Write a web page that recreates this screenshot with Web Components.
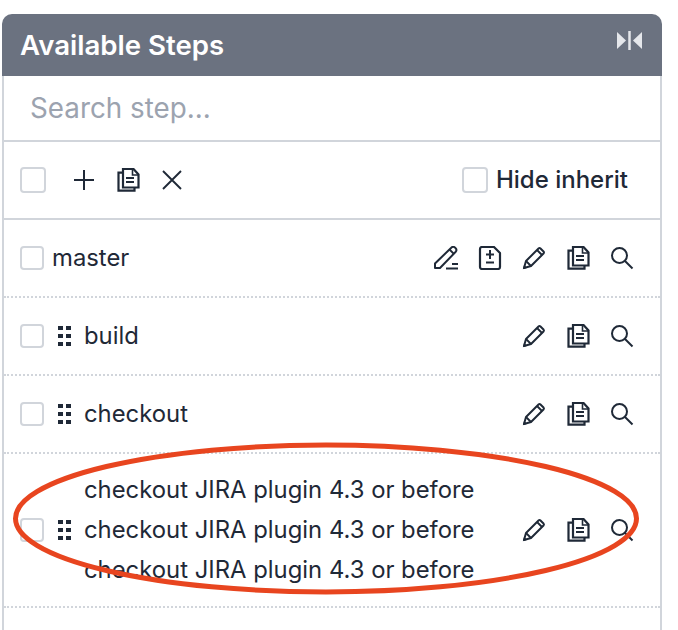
<!doctype html>
<html>
	<head>
		<meta charset="utf-8">
		<title>Available Steps</title>
		<style>
			html, body { margin: 0; height: 100%; background: #fff; }
			body { font-family: Inter, "Liberation Sans", sans-serif; color: #1f2937; overflow: hidden; }
		</style>
	</head>
	<body>
		<steps-panel>
			<steps-toolbar></steps-toolbar>
			<step-row master>master</step-row>
			<step-row>build</step-row>
			<step-row>checkout</step-row>
			<step-row>checkout JIRA plugin 4.3 or before<br>checkout JIRA plugin 4.3 or before<br>checkout JIRA plugin 4.3 or before</step-row>
		</steps-panel>
		<marker-ring></marker-ring>

		<script>
			const icons = {
				plus: '<path d="M12 2v20M2 12h20" stroke-width="2"/>',
				close: '<path d="M3 3l18 18M21 3L3 21" stroke-width="1.900"/>',
				copy: '<path d="M6 4.700H2.500v18H18.500V19" stroke-width="2.200"/><path d="M7 1h10.500l5 5.500v13H7z" stroke-width="2.200"/><path d="M16.500 1v6h6" stroke-width="1.600"/><path d="M10 10h8M10 14h8" stroke-width="2"/>',
				pencil: '<path d="M2 22l2-7L16.500 2.500a1.500 1.500 0 0 1 2 0l3 3a1.500 1.500 0 0 1 0 2L9 20z" stroke-width="2" stroke-linejoin="round"/><path d="M15 4l5 5M4 15l5 5" stroke-width="1.800"/><path d="M.8 23.200l4-1.200-2.800-2.800z" fill="currentColor" stroke="none"/>',
				edit: '<path d="M1 22v-4.500L17 2a2.600 2.600 0 0 1 4.500 4L6 22z" stroke-width="2" stroke-linejoin="round"/><path d="M15.500 3.500l4.500 4.500" stroke-width="1.800"/><path d="M12 22.500h12M18 18h6" stroke-width="2"/>',
				doc: '<path d="M4 1h12l6 6v14a2 2 0 0 1-2 2H4a2 2 0 0 1-2-2V3a2 2 0 0 1 2-2z" stroke-width="2.200" stroke-linejoin="round"/><path d="M12 4v9M8 8.500h8M8 16.500h8" stroke-width="2"/>',
				search: '<circle cx="9.500" cy="9.500" r="7.500" stroke-width="2"/><path d="M15 15l7.500 7.500" stroke-width="2"/>',
				collapse: '<path d="M1 1l9 8.500L1 18z" fill="currentColor" stroke="none"/><path d="M13.500 0v19" stroke-width="2.500"/><path d="M26 1l-9 8.500 9 8.500z" fill="currentColor" stroke="none"/>'
			};

			// plain svg icon, picked by its name attribute
			customElements.define('step-icon', class extends HTMLElement {
				constructor() {
					super();
					let name = this.getAttribute('name');
					let w = name === 'collapse' ? 27 : 24;
					let h = name === 'collapse' ? 19 : 24;
					this.attachShadow({mode: 'open'}).innerHTML = `
					<style>
						:host { display: block; width: ${w}px; height: ${h}px; flex: none; }
						svg { display: block; fill: none; stroke: currentColor; }
					</style>
					<svg width="${w}" height="${h}" viewBox="0 0 ${w} ${h}">${icons[name]}</svg>`;
				}
			});

			customElements.define('step-check', class extends HTMLElement {
				constructor() {
					super();
					this.attachShadow({mode: 'open'}).innerHTML = `
					<style>
						:host {
							display: block; flex: none; box-sizing: border-box;
							width: var(--check-size, 24px); height: var(--check-size, 24px);
							border: 2px solid #d1d5db; border-radius: 4px; background: #fff;
						}
					</style>`;
				}
			});

			customElements.define('drag-handle', class extends HTMLElement {
				constructor() {
					super();
					this.attachShadow({mode: 'open'}).innerHTML = `
					<style>
						:host { display: grid; grid-template-columns: 5px 5px; gap: 4px 3px; flex: none; }
						i { display: block; width: 5px; height: 4px; background: #1f2937; }
					</style>
					<i></i><i></i><i></i><i></i><i></i><i></i>`;
				}
			});

			customElements.define('step-row', class extends HTMLElement {
				constructor() {
					super();
					let master = this.hasAttribute('master');
					let actions = (master ? ['edit', 'doc'] : []).concat(['pencil', 'copy', 'search']);
					this.attachShadow({mode: 'open'}).innerHTML = `
					<style>
						:host {
							display: flex; align-items: center; box-sizing: border-box; min-height: 78px;
							padding: 16px 26px 16px 16px; border-bottom: 2px dotted #d1d5db;
							font-size: 23.850px; line-height: 40px;
						}
						drag-handle { margin-left: 14px; margin-right: 13px; }
						.name { flex: 1; margin-left: ${master ? '8px' : '0'}; }
						.actions { display: flex; gap: 20px; }
					</style>
					<step-check></step-check>
					${master ? '' : '<drag-handle></drag-handle>'}
					<div class="name"><slot></slot></div>
					<div class="actions">${actions.map(a => `<step-icon name="${a}"></step-icon>`).join('')}</div>`;
				}
			});

			customElements.define('steps-panel', class extends HTMLElement {
				constructor() {
					super();
					this.attachShadow({mode: 'open'}).innerHTML = `
					<style>
						:host {
							display: flex; flex-direction: column; box-sizing: border-box;
							margin: 14px 16px 0 2px; height: 616px;
							border-radius: 10px 10px 0 0; overflow: hidden;
						}
						header {
							display: flex; justify-content: space-between; flex: none; box-sizing: border-box;
							height: 62px; padding: 16px 19px 0 18px;
							background: #6b7280; color: #fff;
							font-size: 27.600px; line-height: 30px; font-weight: 600;
						}
						step-icon { color: #e5e7eb; margin-top: 1px; }
						.body { flex: 1; border: solid #d1d5db; border-width: 0 2px; }
						.search {
							box-sizing: border-box; height: 66px; padding: 12px 26px;
							border-bottom: 2px solid #d1d5db;
							font-size: 27.800px; line-height: 40px; color: #9ca3af;
						}
					</style>
					<header><span>Available Steps</span><step-icon name="collapse"></step-icon></header>
					<div class="body">
						<div class="search">Search step...</div>
						<slot></slot>
					</div>`;
				}
			});

			customElements.define('steps-toolbar', class extends HTMLElement {
				constructor() {
					super();
					this.attachShadow({mode: 'open'}).innerHTML = `
					<style>
						:host {
							display: flex; align-items: center; box-sizing: border-box; height: 78px;
							padding: 0 32px 0 16px; border-bottom: 2px solid #d1d5db;
							font-size: 24px; --check-size: 26px;
						}
						.tools { display: flex; gap: 20px; margin-left: 26px; flex: 1; }
						.hide { margin: 0 0 2px 8px; font-weight: 500; }
					</style>
					<step-check></step-check>
					<div class="tools">
						<step-icon name="plus"></step-icon>
						<step-icon name="copy"></step-icon>
						<step-icon name="close"></step-icon>
					</div>
					<step-check></step-check>
					<span class="hide">Hide inherit</span>`;
				}
			});

			// red marker drawn over the screenshot
			customElements.define('marker-ring', class extends HTMLElement {
				constructor() {
					super();
					this.attachShadow({mode: 'open'}).innerHTML = `
					<style>
						:host { position: absolute; left: 0; top: 0; pointer-events: none; }
						svg { display: block; }
					</style>
					<svg width="678" height="630"><ellipse cx="326" cy="518.500" rx="310.500" ry="73.500" fill="none" stroke="#e8451f" stroke-width="5"/></svg>`;
				}
			});
		</script>
	</body>
</html>
